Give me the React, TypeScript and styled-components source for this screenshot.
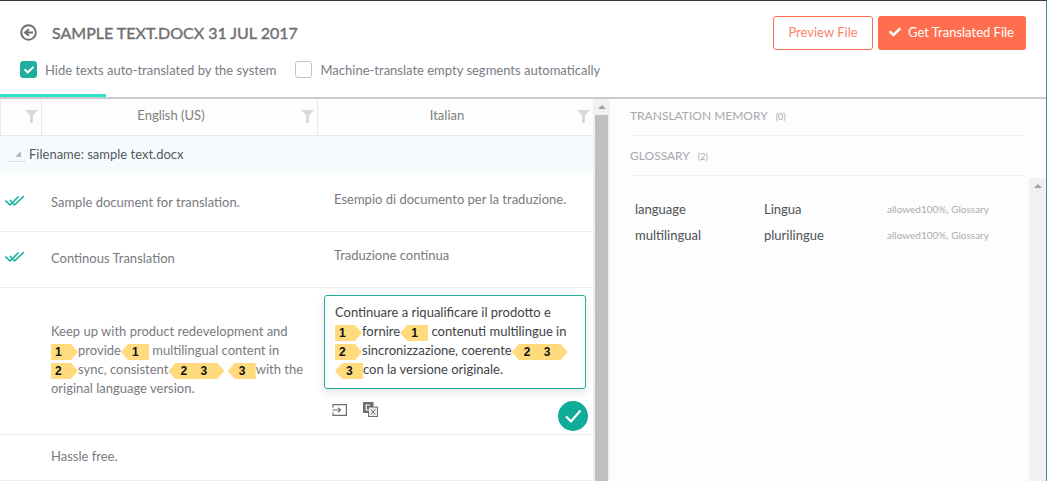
import React from "react";
import styled, { createGlobalStyle } from "styled-components";
import { FaCheck } from "react-icons/fa";

const Global = createGlobalStyle`
  html, body { margin: 0; padding: 0; background: #fff; }
  body { font-family: Lato, "Open Sans", sans-serif; overflow: hidden; }
  * { box-sizing: border-box; }
`;

const Page = styled.div`
  width: 1047px;
  height: 481px;
  overflow: hidden;
  display: flex;
  flex-direction: column;
  border-top: 1px solid #33363b;
  border-right: 1px solid #3f8f9f;
`;

const Header = styled.header`
  height: 96px;
  flex: none;
  display: flex;
  justify-content: space-between;
  padding: 15px 20px 0 20px;
  position: relative;
`;

const AccentBar = styled.div`
  position: absolute;
  left: 0;
  bottom: 0;
  width: 106px;
  height: 3px;
  background: #2de3c8;
`;

const HeaderLeft = styled.div`
  display: flex;
  flex-direction: column;
  gap: 12px;
`;

const TitleRow = styled.div`
  display: flex;
  align-items: center;
  gap: 15px;
  height: 33px;
`;

const Title = styled.h1`
  margin: 0;
  font-size: 16px;
  font-weight: 400;
  -webkit-text-stroke: 0.4px #6f6f6f;
  color: #6f6f6f;
  line-height: 33px;
`;

const Options = styled.div`
  display: flex;
  align-items: center;
`;

const Option = styled.label`
  display: flex;
  align-items: center;
  gap: 8px;
  font-size: 13px;
  color: #7b7b84;
  margin-right: 19px;
`;

const CheckBox = styled.span<{ $on?: boolean }>`
  width: 17px;
  height: 17px;
  border-radius: 3px;
  border: 1px solid ${(p) => (p.$on ? "#1fae9b" : "#c4c4c4")};
  background: ${(p) => (p.$on ? "#1fae9b" : "#fff")};
  color: #fff;
  font-size: 10px;
  display: flex;
  align-items: center;
  justify-content: center;
`;

const Buttons = styled.div`
  display: flex;
  gap: 5px;
`;

const OutlineButton = styled.button`
  width: 100px;
  height: 34px;
  padding: 0 0 2px;
  border: 1px solid #ff6f4f;
  border-radius: 3px;
  background: #fff;
  color: #ff7f6a;
  font: 400 13px Lato, sans-serif;
`;

const SolidButton = styled.button`
  width: 148px;
  height: 34px;
  padding: 0 1px 2px 0;
  border: 0;
  border-radius: 3px;
  background: #ff6f4f;
  color: #fff;
  font: 400 13px Lato, sans-serif;
  display: flex;
  align-items: center;
  justify-content: center;
  gap: 7px;
`;

const Body = styled.main`
  flex: 1;
  display: flex;
  min-height: 0;
  border-top: 2px solid #c9cccc;
`;

const Grid = styled.section`
  width: 593px;
  flex: none;
  display: flex;
  flex-direction: column;
`;

const HeadRow = styled.div`
  height: 37px;
  flex: none;
  display: grid;
  grid-template-columns: 42px 276px 275px;
  border-bottom: 1px solid #e6e9e9;
  background: #fdfdfd;
`;

const HeadCell = styled.div`
  position: relative;
  display: flex;
  align-items: center;
  justify-content: center;
  padding: 0 17px 4px 0;
  font-size: 13px;
  color: #7f7f7f;
  border-right: 1px solid #e6e9e9;
  &:first-child { border-left: 1px solid #e6e9e9; }
  &:last-child { border-right: 0; }
`;

const FunnelIcon = styled.svg`
  position: absolute;
  right: 3px;
  top: 11px;
`;

const GroupRow = styled.div`
  height: 36px;
  flex: none;
  display: flex;
  align-items: center;
  padding: 0 0 1px 15px;
  gap: 8px;
  font-size: 13px;
  color: #55595e;
  background: #f5fbfd;
`;

const GroupArrow = styled.span`
  position: relative;
  width: 0;
  height: 0;
  border-left: 6px solid transparent;
  border-bottom: 6px solid #b4b8b8;
  &::after {
    content: "";
    position: absolute;
    left: -12px;
    top: 10px;
    width: 16px;
    border-top: 1px dotted #c9cccc;
  }
`;

const Seg = styled.div<{ $h: number }>`
  height: ${(p) => p.$h}px;
  flex: none;
  display: grid;
  grid-template-columns: 42px 276px 275px;
  border-bottom: 1px solid #ebeded;
  position: relative;
`;

const Status = styled.div<{ $top: number }>`
  padding: ${(p) => p.$top}px 0 0 5px;
`;

const SrcCell = styled.div<{ $top: number }>`
  padding: ${(p) => p.$top}px 10px 0 9px;
  font-size: 13px;
  line-height: 19px;
  color: #7a7a80;
`;

const TgtCell = styled.div<{ $top: number }>`
  padding: ${(p) => p.$top}px 10px 0 16px;
  font-size: 13px;
  line-height: 19px;
  color: #7a7a80;
`;

const EditCell = styled.div`
  padding: 7px 7px 0 6px;
`;

const Card = styled.div`
  height: 94px;
  padding: 7px 10px;
  border: 1px solid #1fae9b;
  border-radius: 3px;
  background: #fff;
  box-shadow: 0 4px 10px rgba(0, 0, 0, 0.1);
  font-size: 13px;
  line-height: 19px;
  color: #3f4348;
`;

const Tools = styled.div`
  display: flex;
  align-items: center;
  gap: 16px;
  padding: 13px 0 0 8px;
`;

const DoneBadge = styled.div`
  position: absolute;
  right: 5px;
  top: 113px;
  width: 30px;
  height: 30px;
  border-radius: 50%;
  background: #10ac9a;
  display: flex;
  align-items: center;
  justify-content: center;
`;

const Tag = styled.span<{ $dir: "r" | "l" | "b"; $w: number; $pl: number }>`
  display: inline-block;
  vertical-align: top;
  margin-top: 3px;
  width: ${(p) => p.$w}px;
  height: 16px;
  padding-left: ${(p) => p.$pl}px;
  background: #ffdb7d;
  color: #111;
  font: 700 12px/17px "Liberation Sans", Arial, sans-serif;
  white-space: pre;
  word-spacing: 10px;
  clip-path: ${(p) =>
    p.$dir === "r"
      ? `polygon(0 0, calc(100% - 7px) 0, 100% 50%, calc(100% - 7px) 100%, 0 100%)`
      : p.$dir === "l"
        ? `polygon(7px 0, 100% 0, 100% 100%, 7px 100%, 0 50%)`
        : `polygon(7px 0, calc(100% - 7px) 0, 100% 50%, calc(100% - 7px) 100%, 7px 100%, 0 50%)`};
`;

const Scroll = styled.div`
  width: 17px;
  flex: none;
  background: #f1f1f1;
  display: flex;
  flex-direction: column;
  align-items: center;
`;

const ScrollArrow = styled.span`
  width: 0;
  height: 0;
  margin: 6px 0;
  border-left: 4px solid transparent;
  border-right: 4px solid transparent;
  border-bottom: 4px solid #a3a3a3;
`;

const ScrollThumb = styled.div`
  flex: 1;
  width: 13px;
  background: #c0c0c0;
`;

const Side = styled.aside`
  flex: 1;
  background: #fdfdfd;
  padding-left: 20px;
  display: flex;
  flex-direction: column;
  min-width: 0;
`;

const SideHead = styled.div<{ $h: number; $pb: number }>`
  height: ${(p) => p.$h}px;
  padding-bottom: ${(p) => p.$pb}px;
  flex: none;
  margin-right: 20px;
  display: flex;
  align-items: center;
  gap: 8px;
  border-bottom: 1px solid #eeeeee;
  font-size: 12px;
  color: #a6a9ad;
`;

const Count = styled.span`
  font-size: 9px;
  color: #a6a9ad;
  padding-top: 2px;
`;

const GlossArea = styled.div`
  flex: 1;
  display: flex;
  min-height: 0;
`;

const GlossList = styled.div`
  flex: 1;
  padding: 20px 0 0 5px;
`;

const GlossRow = styled.div`
  display: grid;
  grid-template-columns: 129px 123px 1fr;
  height: 26px;
  align-items: center;
  font-size: 13px;
  color: #4d5157;
`;

const GlossMeta = styled.span`
  font-size: 10px;
  color: #a9adad;
`;

const SideScroll = styled.div`
  width: 17px;
  flex: none;
  margin-top: 2px;
  background: #f1f1f1;
  display: flex;
  justify-content: center;
  align-items: flex-start;
`;

const Funnel = () => (
  <FunnelIcon width="13" height="13" viewBox="0 0 13 13">
    <path d="M0 0h13L8 5.5V13H5V5.5z" fill="#d8dada" />
  </FunnelIcon>
);

const DoubleCheck = () => (
  <svg width="20" height="11" viewBox="0 0 20 11" fill="none" stroke="#19b3a0" strokeWidth="1.6" style={{ display: "block" }}>
    <path d="M0.5 5.5l4.5 4.5L13.5 1.5" />
    <path d="M5 5l4.5 5L19 1" />
  </svg>
);

const T = {
  r1: <Tag $dir="r" $w={27} $pl={4}>1</Tag>,
  r2: <Tag $dir="r" $w={27} $pl={4}>2</Tag>,
  l1: <Tag $dir="l" $w={28} $pl={11}>1</Tag>,
  l3: <Tag $dir="l" $w={28} $pl={11}>3</Tag>,
  b23: <Tag $dir="b" $w={56} $pl={12}>2 3</Tag>,
};

export default function App() {
  return (
    <Page>
      <Global />
      <Header>
        <HeaderLeft>
          <TitleRow>
            <svg width="17" height="17" viewBox="0 0 17 17" fill="none">
              <circle cx="8.5" cy="8.5" r="7.3" stroke="#6f6f6f" strokeWidth="2" />
              <path d="M13 8.5H6.5M9 5.3L5 8.5l4 3.2" stroke="#6f6f6f" strokeWidth="1.9" />
            </svg>
            <Title>SAMPLE TEXT.DOCX 31 JUL 2017</Title>
          </TitleRow>
          <Options>
            <Option>
              <CheckBox $on><FaCheck /></CheckBox>
              Hide texts auto-translated by the system
            </Option>
            <Option>
              <CheckBox />
              Machine-translate empty segments automatically
            </Option>
          </Options>
        </HeaderLeft>
        <Buttons>
          <OutlineButton>Preview File</OutlineButton>
          <SolidButton><FaCheck size={12} />Get Translated File</SolidButton>
        </Buttons>
        <AccentBar />
      </Header>
      <Body>
        <Grid>
          <HeadRow>
            <HeadCell><Funnel /></HeadCell>
            <HeadCell>English (US)<Funnel /></HeadCell>
            <HeadCell>Italian<Funnel /></HeadCell>
          </HeadRow>
          <GroupRow><GroupArrow />Filename: sample text.docx</GroupRow>
          <Seg $h={60}>
            <Status $top={23}><DoubleCheck /></Status>
            <SrcCell $top={21}>Sample document for translation.</SrcCell>
            <TgtCell $top={18}>Esempio di documento per la traduzione.</TgtCell>
          </Seg>
          <Seg $h={56}>
            <Status $top={19}><DoubleCheck /></Status>
            <SrcCell $top={17}>Continous Translation</SrcCell>
            <TgtCell $top={14}>Traduzione continua</TgtCell>
          </Seg>
          <Seg $h={147}>
            <div />
            <SrcCell $top={34}>
              Keep up with product redevelopment and<br />
              {T.r1}provide{T.l1} multilingual content in<br />
              {T.r2}sync, consistent{T.b23} {T.l3}with the<br />
              original language version.
            </SrcCell>
            <EditCell>
              <Card>
                Continuare a riqualificare il prodotto e<br />
                {T.r1}fornire{T.l1} contenuti multilingue in<br />
                {T.r2}sincronizzazione, coerente{T.b23}<br />
                {T.l3}con la versione originale.
              </Card>
              <Tools>
                <svg width="15" height="12" viewBox="0 0 15 12" fill="none" stroke="#6a6f75" strokeWidth="1.2">
                  <path d="M1 3.5V.6h13.4v10.8H1V8.5M.5 6h8M6.2 3.8L8.5 6 6.2 8.2" />
                </svg>
                <svg width="15" height="15" viewBox="0 0 15 15">
                  <rect x="0" y="0" width="10.5" height="11" fill="#6a6f75" />
                  <rect x="5.5" y="5" width="9" height="9.5" fill="#e8eaea" stroke="#6a6f75" />
                  <path d="M7 3H3.2v5H7" fill="none" stroke="#fff" strokeWidth="1.2" />
                  <path d="M8 7.5l4.2 5M12.2 7.5l-4.2 5" stroke="#6a6f75" />
                </svg>
              </Tools>
            </EditCell>
            <DoneBadge>
              <svg width="20" height="20" viewBox="0 0 20 20" fill="none" stroke="#fff" strokeWidth="2.2">
                <path d="M3 10.5l5 5L17.5 4.5" />
              </svg>
            </DoneBadge>
          </Seg>
          <Seg $h={46}>
            <div />
            <SrcCell $top={12}>Hassle free.</SrcCell>
            <div />
          </Seg>
        </Grid>
        <Scroll>
          <ScrollArrow />
          <ScrollThumb />
        </Scroll>
        <Side>
          <SideHead $h={37} $pb={3}>TRANSLATION MEMORY <Count>(0)</Count></SideHead>
          <SideHead $h={40} $pb={1}>GLOSSARY <Count>(2)</Count></SideHead>
          <GlossArea>
            <GlossList>
              <GlossRow><span>language</span><span>Lingua</span><GlossMeta>allowed100%, Glossary</GlossMeta></GlossRow>
              <GlossRow><span>multilingual</span><span>plurilingue</span><GlossMeta>allowed100%, Glossary</GlossMeta></GlossRow>
            </GlossList>
            <SideScroll><ScrollArrow /></SideScroll>
          </GlossArea>
        </Side>
      </Body>
    </Page>
  );
}
